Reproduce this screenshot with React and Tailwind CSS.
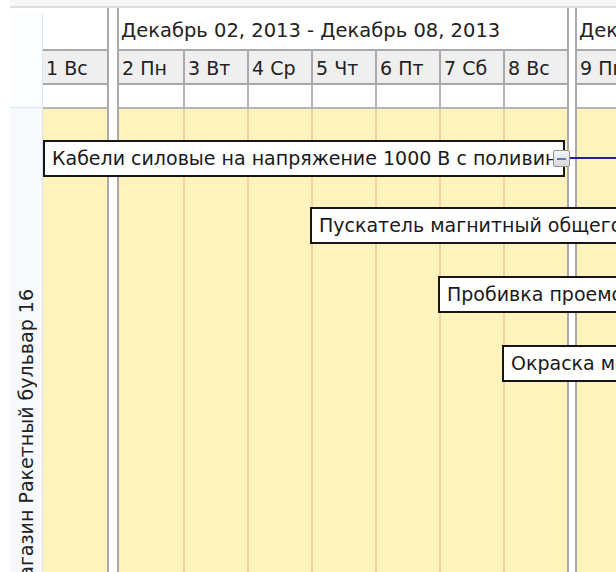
import React from "react";

// Week blocks of the schedule, each with its days
const weeks = [
  { id: 0, label: "", days: ["1 Вс"], first: true },
  {
    id: 1,
    label: "Декабрь 02, 2013 - Декабрь 08, 2013",
    days: ["2 Пн", "3 Вт", "4 Ср", "5 Чт", "6 Пт", "7 Сб", "8 Вс"],
  },
  { id: 2, label: "Декабрь 09, 2013 - Декабрь 15, 2013", days: ["9 Пн", "10 Вт"] },
];

// Task bars placed on the timeline canvas
const tasks = [
  { id: 1, name: "Кабели силовые на напряжение 1000 В с поливинилхлоридной изоляцией", left: 43, top: 140, width: 522 },
  { id: 2, name: "Пускатель магнитный общего назначения", left: 310, top: 207, width: 400 },
  { id: 3, name: "Пробивка проемов в стенах", left: 438, top: 276, width: 300 },
  { id: 4, name: "Окраска металлоконструкций", left: 502, top: 345, width: 300 },
];

const Week = ({ week }) => (
  <div
    className={`flex flex-col shrink-0 border-r-2 border-[#a9a9ad] ${
      week.first ? "mr-[8px]" : "border-l-2 mr-[6px]"
    }`}
  >
    {/* Week label */}
    <div className="h-[41px] pl-[2px] pt-[12px] text-[19.5px] leading-[22px] text-[#222] whitespace-nowrap">
      {week.label}
    </div>
    <div className="flex flex-1">
      {week.days.map((day, i) => (
        <div key={day} className="flex flex-col w-[64px] shrink-0">
          <div
            className={`h-[36px] bg-[#efefef] border-t-2 border-b-2 border-[#a9a9ad] pl-[3px] pt-[3px] flex items-center text-[19px] text-[#222] whitespace-nowrap overflow-hidden ${
              i > 0 ? "border-l-2" : ""
            }`}
          >
            {day}
          </div>
          <div
            className={`h-[24px] bg-white border-b-2 border-[#b5b5b5] ${
              i > 0 ? "border-l-2" : ""
            }`}
          ></div>
          <div
            className={`flex-1 bg-[#fef2bd] ${
              i > 0 ? "border-l-2 border-[#ecd39f]" : ""
            }`}
          ></div>
        </div>
      ))}
    </div>
  </div>
);

const App = () => {
  return (
    <div
      className="relative w-[616px] h-[572px] overflow-hidden bg-white flex flex-col"
      style={{ fontFamily: "'DejaVu Sans', Verdana, sans-serif" }}
    >
      {/* Toolbar edge */}
      <div className="h-[8px] ml-[10px] shrink-0 bg-[#f6f6f6] border-b-2 border-[#dedede]"></div>

      <div className="flex flex-1 min-h-0">
        {/* Resource column */}
        <div className="w-[43px] shrink-0 pl-[10px] flex">
          <div className="flex-1 flex flex-col border-r border-[#d9e5f4] mt-[5px]">
            <div className="h-[95px] shrink-0 bg-[#fcfdfe] border-b border-[#d9e5f4]"></div>
            <div className="flex-1 bg-[#f7f9fc] overflow-hidden flex items-start justify-center pt-[181px]">
              <div className="shrink-0 [writing-mode:vertical-rl] rotate-180 text-[19px] leading-[22px] text-[#222] whitespace-nowrap">
                Магазин Ракетный бульвар 16
              </div>
            </div>
          </div>
        </div>

        {/* Timeline */}
        <div className="flex flex-1 min-w-0 overflow-hidden">
          {weeks.map((w) => (
            <Week key={w.id} week={w} />
          ))}
        </div>
      </div>

      {/* Tasks */}
      {tasks.map((t) => (
        <div
          key={t.id}
          className="absolute h-[37px] bg-white border-2 border-[#161616] pl-[7px] flex items-center overflow-hidden text-[19px] text-[#1a1a1a] whitespace-nowrap"
          style={{ left: t.left, top: t.top, width: t.width }}
        >
          {t.name}
        </div>
      ))}

      {/* Collapse toggle and link */}
      <div className="absolute left-[553px] top-[150px] w-[17px] h-[17px] rounded-[2px] border border-[#8f8f95] bg-gradient-to-b from-[#f6f6f6] to-[#d6d6da] flex items-center justify-center">
        <div className="w-[9px] h-[2px] bg-[#5b7bc4]"></div>
      </div>
      <div className="absolute left-[570px] top-[157px] w-[46px] h-[2px] bg-[#1f20a3]"></div>
    </div>
  );
};

export default App;
